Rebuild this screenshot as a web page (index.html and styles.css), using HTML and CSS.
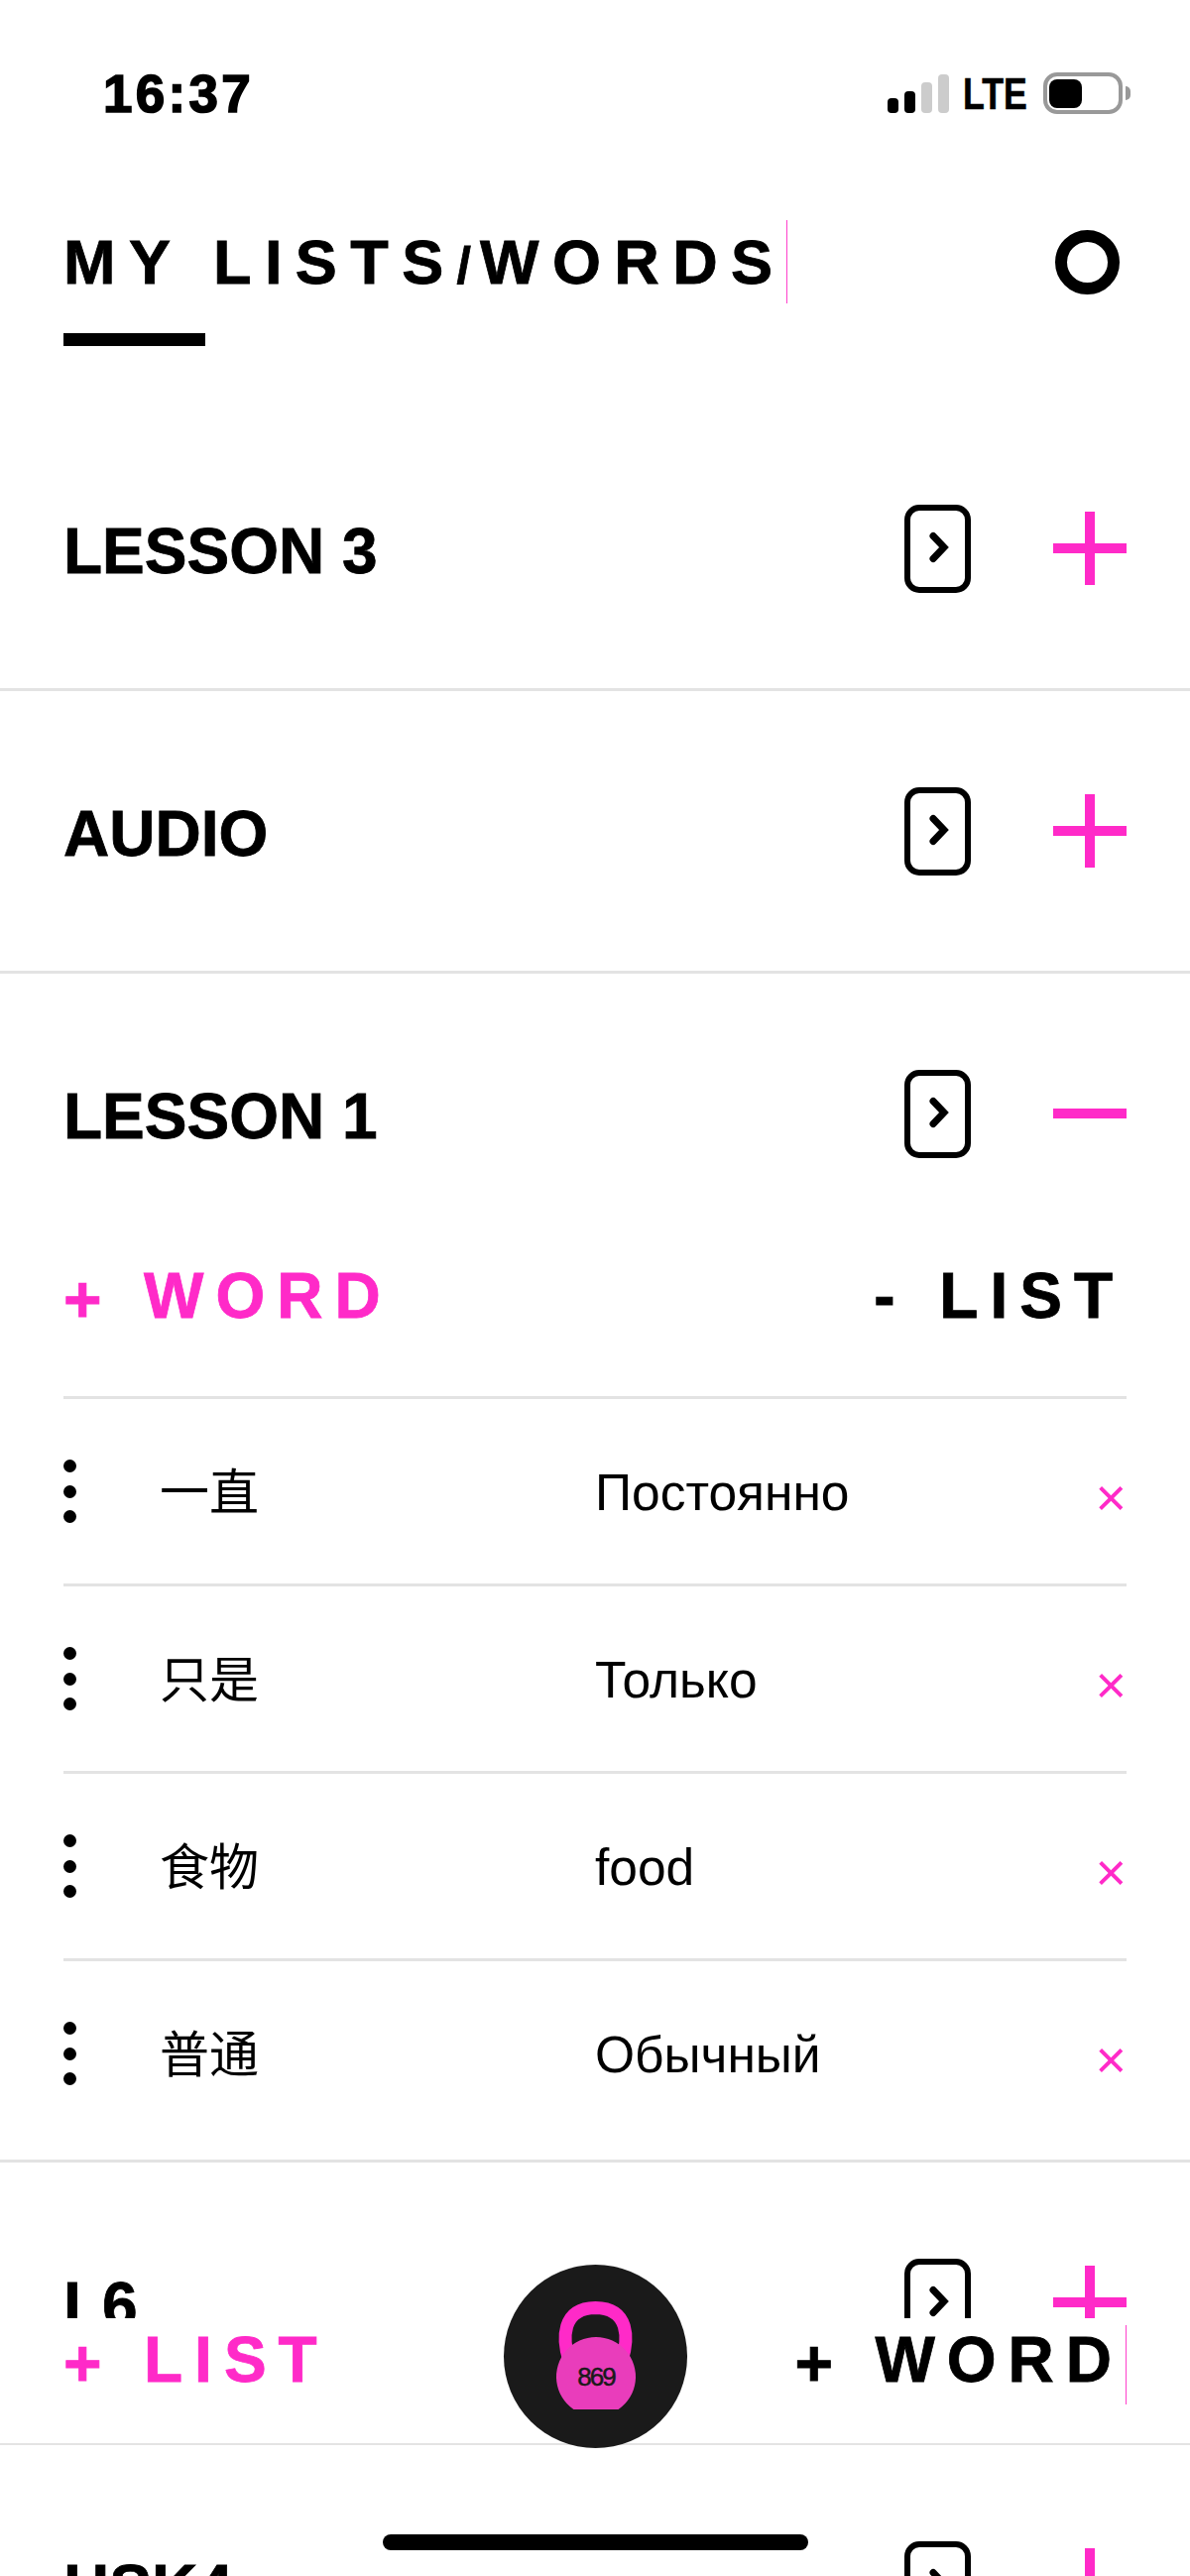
FILE: index.html
```html
<!DOCTYPE html>
<html lang="en">
<head>
  <meta charset="UTF-8">
  <title>My lists / words</title>
  <link rel="stylesheet" href="styles.css">
</head>
<body>
  <svg class="defs" width="0" height="0">
    <symbol id="open-icon" viewBox="0 0 67 89">
      <rect x="3" y="3" width="61" height="83" rx="12" fill="none" stroke="#000" stroke-width="6"/>
      <path d="M29 31.5 L40 43 L29 54.5" fill="none" stroke="#000" stroke-width="7" stroke-linecap="round" stroke-linejoin="miter"/>
    </symbol>
    <symbol id="plus-icon" viewBox="0 0 74 74">
      <rect x="32" y="0" width="10" height="74" fill="#ff2ac8"/>
      <rect x="0" y="32" width="74" height="10" fill="#ff2ac8"/>
    </symbol>
    <symbol id="minus-icon" viewBox="0 0 74 74">
      <rect x="0" y="32" width="74" height="10" fill="#ff2ac8"/>
    </symbol>
  </svg>

  <div class="status-bar">
    <span class="time">16:37</span>
    <div class="status-icons">
      <div class="signal">
        <i class="bar bar-1"></i>
        <i class="bar bar-2"></i>
        <i class="bar bar-3 off"></i>
        <i class="bar bar-4 off"></i>
      </div>
      <span class="lte">LTE</span>
      <div class="battery"><div class="battery-fill"></div></div>
      <div class="battery-nub"></div>
    </div>
  </div>

  <header class="header">
    <div class="header-top">
      <h1 class="title">MY LISTS<span class="slash">/</span>WORDS</h1>
      <div class="ring"></div>
    </div>
    <div class="title-bar"></div>
  </header>

  <main class="lists">
    <section class="list">
      <div class="list-head">
        <h2 class="list-name">LESSON 3</h2>
        <svg class="open-icon"><use href="#open-icon"/></svg>
        <svg class="toggle-icon"><use href="#plus-icon"/></svg>
      </div>
    </section>

    <section class="list">
      <div class="list-head">
        <h2 class="list-name">AUDIO</h2>
        <svg class="open-icon"><use href="#open-icon"/></svg>
        <svg class="toggle-icon"><use href="#plus-icon"/></svg>
      </div>
    </section>

    <section class="list list-open">
      <div class="list-head">
        <h2 class="list-name">LESSON 1</h2>
        <svg class="open-icon"><use href="#open-icon"/></svg>
        <svg class="toggle-icon"><use href="#minus-icon"/></svg>
      </div>

      <div class="list-actions">
        <span class="action pink"><span class="sign">+</span>WORD</span>
        <span class="action action-right"><span class="sign sign-minus">-</span>LIST</span>
      </div>

      <div class="word">
        <div class="dots"><i></i><i></i><i></i></div>
        <span class="word-zh">一直</span>
        <span class="word-tr">Постоянно</span>
        <span class="word-del">×</span>
      </div>
      <div class="word">
        <div class="dots"><i></i><i></i><i></i></div>
        <span class="word-zh">只是</span>
        <span class="word-tr">Только</span>
        <span class="word-del">×</span>
      </div>
      <div class="word">
        <div class="dots"><i></i><i></i><i></i></div>
        <span class="word-zh">食物</span>
        <span class="word-tr">food</span>
        <span class="word-del">×</span>
      </div>
      <div class="word">
        <div class="dots"><i></i><i></i><i></i></div>
        <span class="word-zh">普通</span>
        <span class="word-tr">Обычный</span>
        <span class="word-del">×</span>
      </div>
    </section>

    <section class="list">
      <div class="list-head">
        <h2 class="list-name">L6</h2>
        <svg class="open-icon"><use href="#open-icon"/></svg>
        <svg class="toggle-icon"><use href="#plus-icon"/></svg>
      </div>
    </section>

    <section class="list">
      <div class="list-head">
        <h2 class="list-name">HSK4</h2>
        <svg class="open-icon"><use href="#open-icon"/></svg>
        <svg class="toggle-icon"><use href="#plus-icon"/></svg>
      </div>
    </section>
  </main>

  <div class="bottom-bar">
    <span class="action pink"><span class="sign">+</span>LIST</span>
    <span class="action action-caret"><span class="sign">+</span>WORD</span>
  </div>

  <div class="fab">
    <svg width="185" height="185" viewBox="0 0 185 185">
      <path d="M66 97 C59 75 58 44 92.5 43.5 C127 44 126 75 119 97" fill="none" stroke="#ff2ac8" stroke-width="13"/>
      <path d="M70.4 146 A40 40 0 1 1 115.6 146 Z" fill="#e93dbb"/>
      <text class="fab-text" x="93" y="122" text-anchor="middle">869</text>
    </svg>
  </div>

  <div class="home-indicator"></div>
</body>
</html>
```

FILE: styles.css
```css
* {
  box-sizing: border-box;
}

html, body {
  margin: 0;
  padding: 0;
}

body {
  position: relative;
  width: 1200px;
  height: 2598px;
  overflow: hidden;
  background: #fff;
  color: #000;
  font-family: "Liberation Sans", "Noto Sans CJK SC", sans-serif;
}

.defs {
  display: block;
  height: 0;
}

/* status bar */
.status-bar {
  display: flex;
  justify-content: space-between;
  align-items: flex-start;
  height: 224px;
  padding: 64px 60px 0 104px;
}

.time {
  font-size: 53px;
  font-weight: 700;
  line-height: 62px;
  letter-spacing: 3.3px;
  -webkit-text-stroke: 1.6px #000;
}

.status-icons {
  display: flex;
  align-items: flex-start;
  padding-top: 9px;
}

.signal {
  display: flex;
  align-items: flex-end;
  gap: 6px;
  height: 39px;
  margin-top: 2px;
}

.bar {
  display: block;
  width: 11px;
  background: #000;
  border-radius: 4px;
}

.bar.off {
  background: #ccc;
}

.bar-1 { height: 15px; }
.bar-2 { height: 22px; }
.bar-3 { height: 31px; }
.bar-4 { height: 39px; }

.lte {
  display: block;
  width: 65px;
  margin-left: 14px;
  font-size: 44px;
  font-weight: 700;
  line-height: 44px;
  transform: scaleX(0.81);
  transform-origin: left top;
  -webkit-text-stroke: 0.6px #000;
}

.battery {
  width: 80px;
  height: 42px;
  margin-left: 16px;
  padding: 3px 0 0 2px;
  border: 4px solid #999;
  border-radius: 14px;
}

.battery-fill {
  width: 33px;
  height: 29px;
  background: #000;
  border-radius: 8px;
}

.battery-nub {
  width: 5px;
  height: 14px;
  margin: 14px 0 0 3px;
  background: #999;
  border-radius: 0 7px 7px 0;
}

/* page header */
.header {
  padding: 0 64px;
}

.header-top {
  display: flex;
  justify-content: space-between;
  align-items: center;
  height: 80px;
  padding-right: 7px;
}

.title {
  margin: 0;
  padding-top: 5px;
  border-right: 1px solid #ff40cc;
  font-size: 63px;
  font-weight: 700;
  line-height: 75px;
  letter-spacing: 13.4px;
  white-space: pre;
  -webkit-text-stroke: 0.8px #000;
}

.slash {
  font-size: 52px;
  letter-spacing: 9px;
}

.ring {
  width: 65px;
  height: 65px;
  margin-top: 1px;
  border: 12px solid #000;
  border-radius: 50%;
}

.title-bar {
  width: 143px;
  height: 13px;
  margin-top: 32px;
  background: #000;
}

/* lists */
.lists {
  margin-top: 63px;
}

.list {
  border-bottom: 3px solid #e3e3e3;
}

.list-head {
  display: flex;
  align-items: center;
  height: 282px;
  padding: 0 64px;
}

.list-name {
  flex: 1;
  margin: 0;
  padding-top: 6px;
  font-size: 64px;
  font-weight: 700;
  line-height: 70px;
  -webkit-text-stroke: 0.8px #000;
}

.open-icon {
  width: 67px;
  height: 89px;
}

.toggle-icon {
  width: 74px;
  height: 74px;
  margin-left: 83px;
}

.list-open {
  padding-bottom: 14px;
}

.list-actions {
  display: flex;
  justify-content: space-between;
  height: 144px;
  margin: 0 64px;
  padding-top: 8px;
}

.action {
  font-size: 64px;
  font-weight: 700;
  line-height: 70px;
  letter-spacing: 12px;
  -webkit-text-stroke: 0.8px currentColor;
}

.action-right {
  padding-right: 2px;
}

.pink {
  color: #ff2ac8;
}

.sign {
  display: inline-block;
  width: 81px;
  font-size: 66px;
  line-height: 0;
  letter-spacing: 0;
  vertical-align: -4px;
}

.sign-minus {
  width: 66px;
  font-size: 64px;
  vertical-align: baseline;
}

.word {
  display: flex;
  align-items: center;
  height: 189px;
  margin: 0 64px;
  border-top: 3px solid #e3e3e3;
}

.dots {
  display: flex;
  flex-direction: column;
  gap: 12.5px;
  width: 97px;
}

.dots i {
  display: block;
  width: 13px;
  height: 13px;
  background: #000;
  border-radius: 50%;
}

.word-zh {
  width: 439px;
  margin-bottom: 6px;
  font-size: 50px;
}

.word-tr {
  flex: 1;
  margin-top: 2px;
  font-size: 51.5px;
}

.word-del {
  color: #ff2ac8;
  font-size: 54px;
  line-height: 50px;
  margin-top: 11px;
}

/* bottom overlay */
.bottom-bar {
  position: absolute;
  left: 0;
  right: 0;
  top: 2338px;
  display: flex;
  justify-content: space-between;
  height: 126px;
  padding: 7px 64px 0;
  background: #fff;
}

.action-caret {
  height: 80px;
  padding-right: 2px;
  border-right: 1px solid #ff40cc;
}

.fab {
  position: absolute;
  left: 508px;
  top: 2284px;
  width: 185px;
  height: 185px;
  background: #1a1a1a;
  border-radius: 50%;
}

.fab svg {
  display: block;
}

.fab-text {
  fill: #1a1a1a;
  stroke: #1a1a1a;
  stroke-width: 0.5px;
  font-size: 26px;
  letter-spacing: -2px;
}

.home-indicator {
  position: absolute;
  left: 386px;
  top: 2556px;
  width: 429px;
  height: 16px;
  background: #000;
  border-radius: 8px;
}
```
